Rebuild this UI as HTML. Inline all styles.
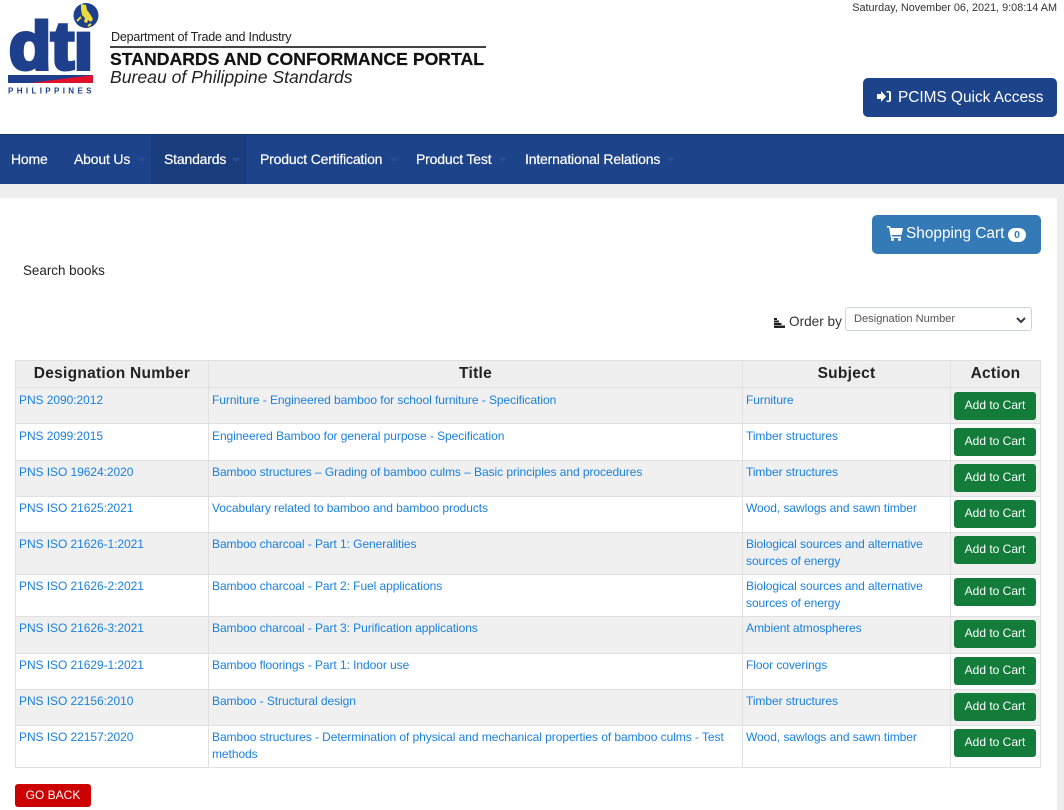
<!DOCTYPE html>
<html lang="en"><head><meta charset="utf-8"><title>Standards and Conformance Portal</title>
<style>
*{box-sizing:border-box}
html,body{margin:0;padding:0}
body{width:1064px;height:810px;overflow:hidden;background:#fff;position:relative;font-family:"Liberation Sans",sans-serif;color:#222}
.a{position:absolute;white-space:nowrap}
.nav{left:0;top:134px;width:1064px;height:50px;background:#1d438a;border-top:1px solid #16356f}
.n{position:absolute;top:151px;color:#fff;font-size:14px;line-height:16px;white-space:nowrap;letter-spacing:-.18px;-webkit-text-stroke:.2px #fff}
.c{position:absolute;top:158px;width:0;height:0;border:4px solid transparent;border-top-color:#2a4f92;border-bottom:0}
table{position:absolute;left:15px;top:360px;width:1025px;border-collapse:collapse;table-layout:fixed;font-size:12px;line-height:17px;letter-spacing:-.06px}
td,th{border:1px solid #e0e0e0;padding:4px 3px 0;vertical-align:top;overflow:hidden}
th{height:27px;background:#eee;font-size:15.5px;line-height:18px;letter-spacing:.27px;color:#222;padding:4px 0 0;text-align:center}
td{color:#1a80e0}
tr.g td{background:#f0f0f0}
tr.p3 td{padding-top:3px}
td.b,tr.p3 td.b{padding:0;position:relative}
.btn{position:absolute;left:3px;top:4px;width:82px;height:28px;background:#137c3a;border-radius:3px;color:#fff;font-size:12px;line-height:27px;text-align:center;letter-spacing:0}
tr.p3 .btn{top:3px}
</style></head><body>
<svg class="a" style="left:0;top:0" width="110" height="100" viewBox="0 0 110 100">
<circle cx="86" cy="15.500" r="12.500" fill="#1d3f8c"/>
<path d="M81 4l5 1 1 5 3 4 3 5-2 3-3-2-1 3-3-1 1-4-3-3-1-6z" fill="#ecdc3a"/>
<path d="M77 21l4-4M88 26l3-2" stroke="#ecdc3a" stroke-width="2"/>
<text x="9" y="69" font-family="Liberation Sans" font-weight="700" font-size="67" fill="#1d3f8c" stroke="#1d3f8c" stroke-width="4" textLength="84" lengthAdjust="spacingAndGlyphs">dtı</text>
<path d="M8 75H93V83H8z" fill="#1d3f8c"/>
<path d="M30 83L93 75V83z" fill="#e3102a"/>
<text x="8" y="93.500" font-family="Liberation Sans" font-weight="700" font-size="8" fill="#1d3f8c" textLength="83.500">PHILIPPINES</text>
</svg>
<div class="a" style="left:111px;top:30px;font-size:12.600px;line-height:14px;color:#222;letter-spacing:-.25px">Department of Trade and Industry</div>
<div class="a" style="left:110px;top:46px;width:376px;height:2px;background:#444"></div>
<div class="a" style="left:110px;top:49px;font-size:17.650px;line-height:20px;font-weight:700;color:#111;-webkit-text-stroke:.2px #111">STANDARDS AND CONFORMANCE PORTAL</div>
<div class="a" style="left:110px;top:68px;font-size:17.600px;line-height:19px;font-style:italic;color:#222">Bureau of Philippine Standards</div>
<div class="a" style="right:7px;top:2px;font-size:10.850px;line-height:13px;color:#333">Saturday, November 06, 2021, 9:08:14 AM</div>
<div class="a" style="left:863px;top:78px;width:194px;height:39px;background:#1d438a;border-radius:5px"></div>
<svg class="a" style="left:876px;top:90px" width="15" height="13" viewBox="0 0 15 13"><path d="M1 4h4V1l5 5.500L5 12V9H1zM10.500 1h2.500a2 2 0 0 1 2 2v7a2 2 0 0 1-2 2h-2.500v-1.500H13V2.500h-2.500z" fill="#fff"/></svg>
<div class="a" style="left:898px;top:88px;font-size:15.400px;line-height:19px;color:#fff">PCIMS Quick Access</div>
<div class="a nav"></div>
<div class="a" style="left:151px;top:135px;width:95px;height:49px;background:#1a3d7e"></div>
<div class="n" style="left:11px">Home</div>
<div class="n" style="left:74px">About Us</div><div class="c" style="left:138px"></div>
<div class="n" style="left:164px">Standards</div><div class="c" style="left:232px"></div>
<div class="n" style="left:260px">Product Certification</div><div class="c" style="left:390px"></div>
<div class="n" style="left:416px">Product Test</div><div class="c" style="left:499px"></div>
<div class="n" style="left:525px">International Relations</div><div class="c" style="left:667px"></div>
<div class="a" style="left:0;top:184px;width:1064px;height:14px;background:#eeeeef"></div>
<div class="a" style="left:1057px;top:184px;width:7px;height:626px;background:#eeeeef"></div>
<div class="a" style="left:872px;top:215px;width:169px;height:39px;background:#337ab7;border-radius:5px"></div>
<svg class="a" style="left:887px;top:225px" width="16" height="16" viewBox="0 0 16 16"><path d="M0 1h3l.600 2H16l-1.500 7H5l.3 1.500H14V13H4L2 2.500H0z" fill="#fff"/><circle cx="5.500" cy="14.500" r="1.500" fill="#fff"/><circle cx="12.500" cy="14.500" r="1.500" fill="#fff"/></svg>
<div class="a" style="left:906px;top:225px;font-size:15.400px;line-height:18px;color:#fff">Shopping Cart</div>
<div class="a" style="left:1008px;top:228px;width:18px;height:14px;border-radius:7px;background:#fff;color:#337ab7;font-size:10.500px;line-height:14px;font-weight:700;text-align:center">0</div>
<div class="a" style="left:23px;top:263px;font-size:13.400px;line-height:16px;color:#222">Search books</div>
<svg class="a" style="left:774px;top:318px" width="11" height="10" viewBox="0 0 11 10"><path d="M0 0h3v2H0zM0 2.500h5v2H0zM0 5h7.500v2H0zM0 7.500h11V10H0z" fill="#222"/></svg>
<div class="a" style="left:789px;top:313px;font-size:13.600px;line-height:17px;color:#333">Order by</div>
<div class="a" style="left:845px;top:307px;width:187px;height:24px;border:1px solid #ced4da;border-radius:3px;background:#fff;font-size:11.100px;line-height:22px;padding-left:8px;color:#555">Designation Number</div>
<svg class="a" style="left:1015px;top:316px" width="12" height="8" viewBox="0 0 12 8"><path d="M2 2l4 4 4-4" fill="none" stroke="#343a40" stroke-width="2"/></svg>
<table>
<colgroup><col style="width:193px"><col style="width:534px"><col style="width:208px"><col style="width:90px"></colgroup>
<tr><th>Designation Number</th><th>Title</th><th>Subject</th><th>Action</th></tr>
<tr class="g" style="height:36px"><td>PNS 2090:2012</td><td>Furniture - Engineered bamboo for school furniture - Specification</td><td>Furniture</td><td class="b"><div class="btn">Add to Cart</div></td></tr>
<tr style="height:37px"><td>PNS 2099:2015</td><td>Engineered Bamboo for general purpose - Specification</td><td>Timber structures</td><td class="b"><div class="btn">Add to Cart</div></td></tr>
<tr class="g p3" style="height:36px"><td>PNS ISO 19624:2020</td><td>Bamboo structures – Grading of bamboo culms – Basic principles and procedures</td><td>Timber structures</td><td class="b"><div class="btn">Add to Cart</div></td></tr>
<tr class="p3" style="height:36px"><td>PNS ISO 21625:2021</td><td>Vocabulary related to bamboo and bamboo products</td><td>Wood, sawlogs and sawn timber</td><td class="b"><div class="btn">Add to Cart</div></td></tr>
<tr class="g p3" style="height:42px"><td>PNS ISO 21626-1:2021</td><td>Bamboo charcoal - Part 1: Generalities</td><td>Biological sources and alternative sources of energy</td><td class="b"><div class="btn">Add to Cart</div></td></tr>
<tr class="p3" style="height:42px"><td>PNS ISO 21626-2:2021</td><td>Bamboo charcoal - Part 2: Fuel applications</td><td>Biological sources and alternative sources of energy</td><td class="b"><div class="btn">Add to Cart</div></td></tr>
<tr class="g p3" style="height:37px"><td>PNS ISO 21626-3:2021</td><td>Bamboo charcoal - Part 3: Purification applications</td><td>Ambient atmospheres</td><td class="b"><div class="btn">Add to Cart</div></td></tr>
<tr class="p3" style="height:36px"><td>PNS ISO 21629-1:2021</td><td>Bamboo floorings - Part 1: Indoor use</td><td>Floor coverings</td><td class="b"><div class="btn">Add to Cart</div></td></tr>
<tr class="g p3" style="height:36px"><td>PNS ISO 22156:2010</td><td>Bamboo - Structural design</td><td>Timber structures</td><td class="b"><div class="btn">Add to Cart</div></td></tr>
<tr class="p3" style="height:42px"><td>PNS ISO 22157:2020</td><td>Bamboo structures - Determination of physical and mechanical properties of bamboo culms - Test methods</td><td>Wood, sawlogs and sawn timber</td><td class="b"><div class="btn">Add to Cart</div></td></tr>
</table>
<div class="a" style="left:15px;top:784px;width:76px;height:23px;background:#cc0000;border-radius:3px;color:#fff;font-size:12px;line-height:23px;text-align:center">GO BACK</div>
</body></html>
